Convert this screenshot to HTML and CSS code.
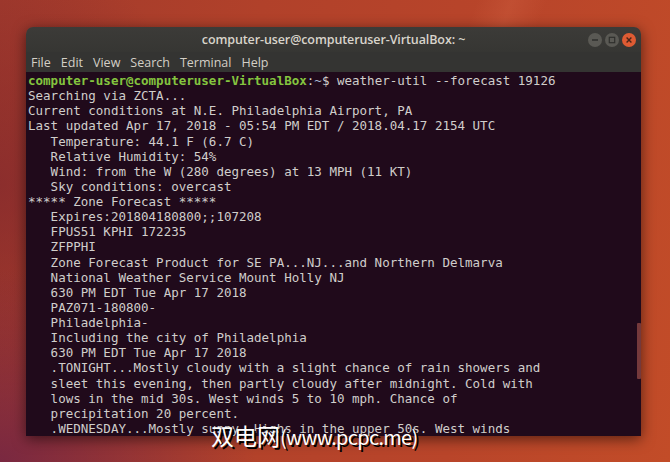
FILE: index.html
```html
<!DOCTYPE html>
<html>
<head>
<meta charset="utf-8">
<link rel="stylesheet" href="styles.css">
</head>
<body>
<div class="desktop">
  <div class="streak"></div>
  <div class="window">
    <div class="titlebar">
      <div class="tb-side"></div>
      <div class="title">computer-user@computeruser-VirtualBox: ~</div>
      <div class="tb-side tb-buttons">
        <span class="wbtn"><svg width="14" height="14" viewBox="0 0 14 14"><line x1="4" y1="7" x2="10" y2="7" stroke="#2f2f2d" stroke-width="1.4"/></svg></span>
        <span class="wbtn"><svg width="14" height="14" viewBox="0 0 14 14"><rect x="4.3" y="4.3" width="5.4" height="5.4" fill="none" stroke="#2f2f2d" stroke-width="1.2"/></svg></span>
        <span class="wbtn close"><svg width="14" height="14" viewBox="0 0 14 14"><path d="M4.6 4.6 L9.4 9.4 M9.4 4.6 L4.6 9.4" stroke="#4a2418" stroke-width="1.4"/></svg></span>
      </div>
    </div>
    <div class="menubar">
      <span>File</span><span>Edit</span><span>View</span><span>Search</span><span>Terminal</span><span>Help</span>
    </div>
    <div class="terminal">
<pre class="out"><span class="pg">computer-user@computeruser-VirtualBox</span>:<span class="pb">~</span>$ weather-util --forecast 19126
Searching via ZCTA...
Current conditions at N.E. Philadelphia Airport, PA
Last updated Apr 17, 2018 - 05:54 PM EDT / 2018.04.17 2154 UTC
   Temperature: 44.1 F (6.7 C)
   Relative Humidity: 54%
   Wind: from the W (280 degrees) at 13 MPH (11 KT)
   Sky conditions: overcast
***** Zone Forecast *****
   Expires:201804180800;;107208
   FPUS51 KPHI 172235
   ZFPPHI
   Zone Forecast Product for SE PA...NJ...and Northern Delmarva
   National Weather Service Mount Holly NJ
   630 PM EDT Tue Apr 17 2018
   PAZ071-180800-
   Philadelphia-
   Including the city of Philadelphia
   630 PM EDT Tue Apr 17 2018
   .TONIGHT...Mostly cloudy with a slight chance of rain showers and
   sleet this evening, then partly cloudy after midnight. Cold with
   lows in the mid 30s. West winds 5 to 10 mph. Chance of
   precipitation 20 percent.
   .WEDNESDAY...Mostly sunny. Highs in the upper 50s. West winds</pre>
      <div class="scrollthumb"></div>
    </div>
  </div>
  <div class="watermark"><span class="wm-cjk">双电网</span><span class="wm-lat">(www.pcpc.me)</span></div>
</div>
</body>
</html>
```
FILE: styles.css
```css
html, body {
  margin: 0;
  padding: 0;
}
.desktop {
  width: 670px;
  height: 462px;
  box-sizing: border-box;
  padding: 27px 0 0 26px;
  position: relative;
  overflow: hidden;
  background:
    radial-gradient(ellipse 320px 240px at 0% 100%, rgba(110,35,70,0.8), rgba(110,35,70,0) 80%),
    radial-gradient(ellipse 260px 300px at 0% 40%, rgba(120,35,45,0.55), rgba(120,35,45,0) 80%),
    linear-gradient(100deg, #a23a2c 0%, #b1412a 35%, #b9452a 70%, #c24c28 100%);
}
.streak {
  position: absolute;
  left: 470px;
  top: 0;
  width: 70px;
  height: 40px;
  background: linear-gradient(90deg, rgba(255,150,110,0) 0%, rgba(255,150,110,0.12) 50%, rgba(255,150,110,0) 100%);
  transform: skewX(-20deg);
}
.window {
  position: relative;
  width: 615px;
  height: 409px;
  display: flex;
  flex-direction: column;
  border-radius: 7px 7px 0 0;
  overflow: hidden;
  box-shadow: 0 3px 14px rgba(0,0,0,0.55);
}
.titlebar {
  height: 25px;
  flex: none;
  display: grid;
  grid-template-columns: 1fr auto 1fr;
  align-items: center;
  background: linear-gradient(#3c3b38, #363633);
}
.title {
  font-family: "Open Sans", "Noto Sans", sans-serif;
  font-weight: 600;
  font-size: 12.5px;
  color: #d8d4cb;
  letter-spacing: -0.1px;
}
.tb-buttons {
  display: flex;
  justify-content: flex-end;
  gap: 3px;
  padding-right: 5px;
}
.wbtn {
  width: 14px;
  height: 14px;
  border-radius: 50%;
  background: #5a5954;
  display: block;
}
.wbtn svg {
  display: block;
}
.wbtn.close {
  background: #de5b33;
}
.menubar {
  height: 20px;
  flex: none;
  display: flex;
  align-items: center;
  gap: 10px;
  padding-left: 5px;
  background: #343432;
  font-family: "Open Sans", "Noto Sans", sans-serif;
  font-size: 12.5px;
  color: #d3cfc6;
}
.terminal {
  flex: 1;
  position: relative;
  background: #200a1b;
}
.out {
  margin: 0;
  padding: 1px 0 0 2px;
  font-family: "DejaVu Sans Mono", monospace;
  font-size: 12.52px;
  line-height: 15.13px;
  color: #d0cecb;
  white-space: pre;
}
.pg {
  color: #84c43f;
  font-weight: bold;
}
.pb {
  color: #a9b8d4;
}
.scrollthumb {
  position: absolute;
  right: 0;
  top: 251px;
  width: 4px;
  height: 56px;
  background: #74393b;
  border-radius: 1px;
}
.watermark {
  position: absolute;
  left: 211px;
  top: 420px;
  font-family: "Noto Sans CJK SC", sans-serif;
  line-height: 30px;
  color: #ffffff;
  text-shadow: 2px 2px 0 #000;
  white-space: nowrap;
}
.wm-cjk {
  font-size: 23px;
  letter-spacing: 0;
}
.wm-lat {
  font-size: 20px;
  letter-spacing: -0.7px;
}
```
